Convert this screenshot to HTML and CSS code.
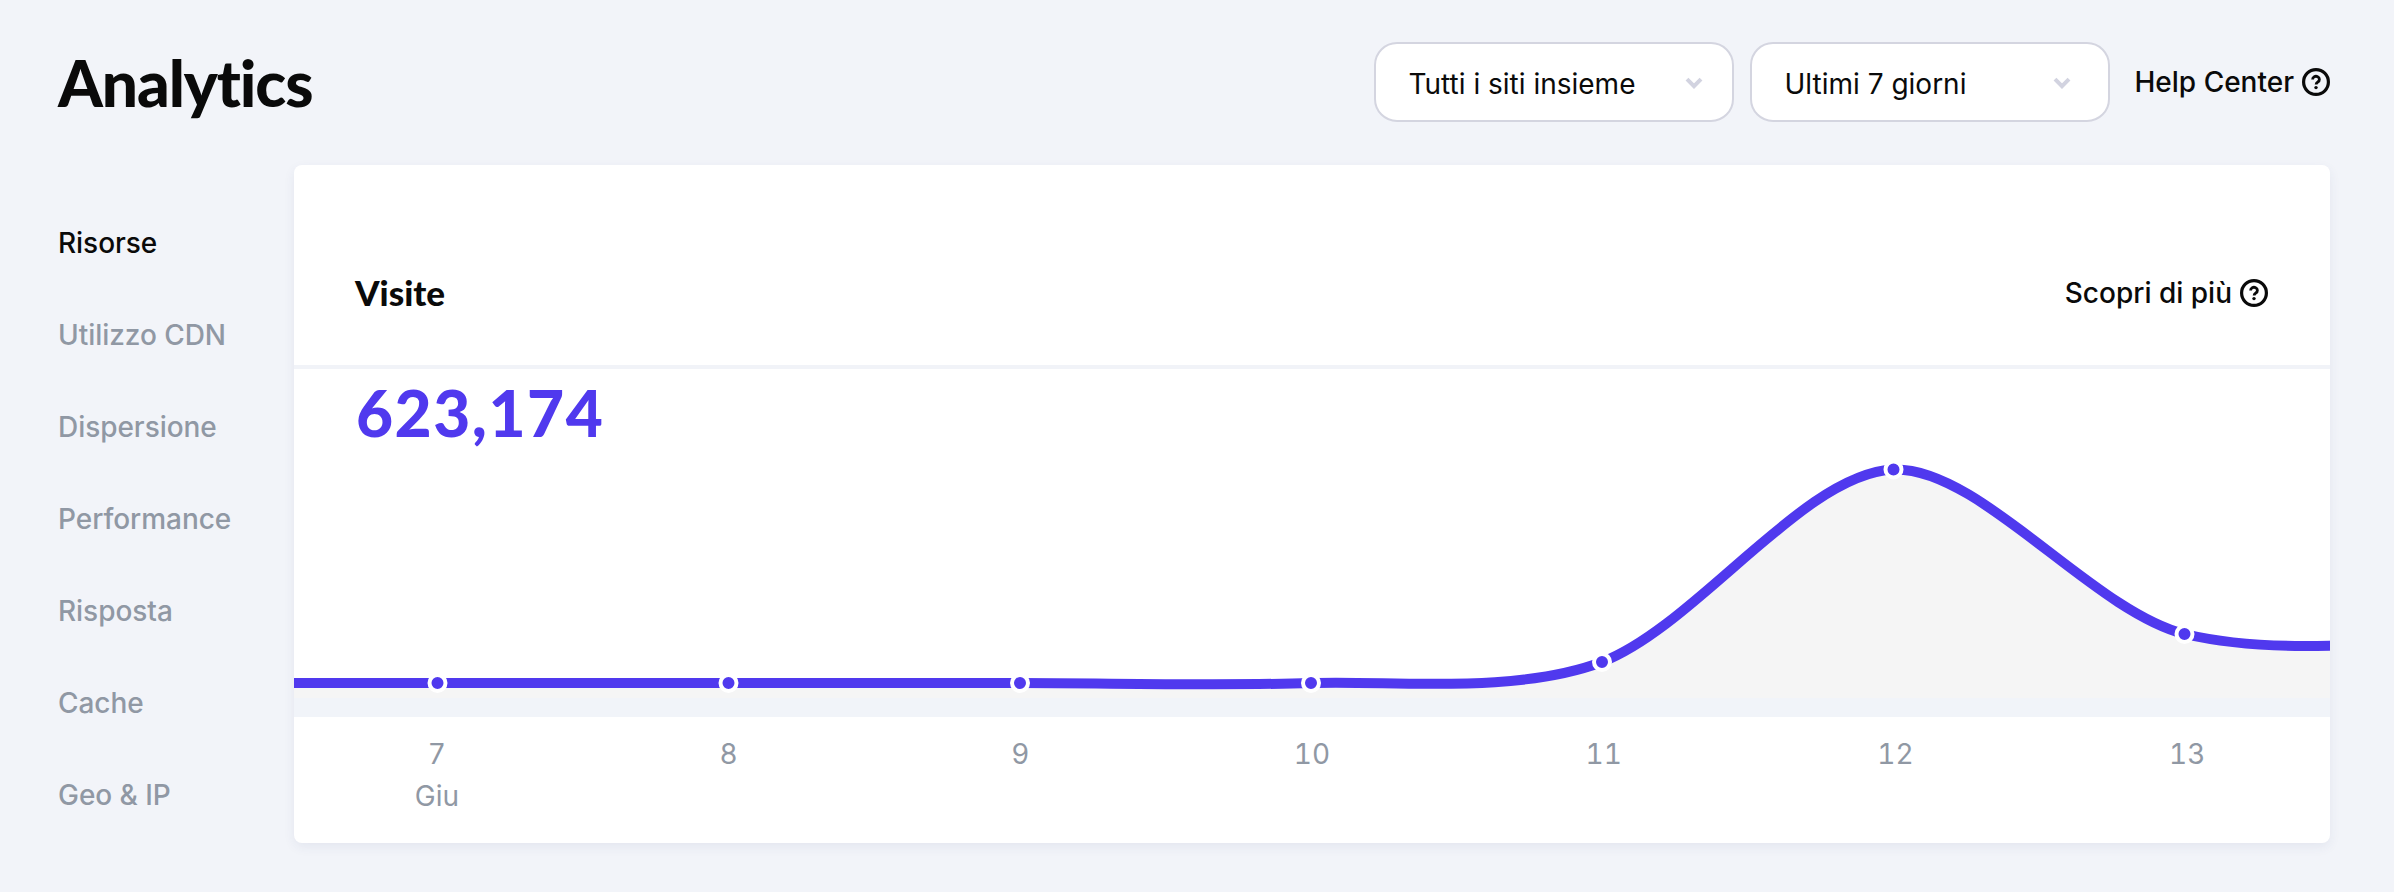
FILE: index.html
```html
<!DOCTYPE html>
<html lang="it">
<head>
<meta charset="utf-8">
<title>Analytics</title>
<link rel="stylesheet" href="styles.css">
</head>
<body>
<svg width="0" height="0" class="sprite">
  <symbol id="help" viewBox="0 0 28 28">
    <circle cx="14" cy="14" r="12.4" fill="none" stroke="currentColor" stroke-width="3.200"/>
    <path d="M10.600 11.400a3.400 3.100 0 1 1 5.200 2.600c-1.200.7-1.700 1.200-1.700 2.600" fill="none" stroke="currentColor" stroke-width="2.800"/>
    <circle cx="14" cy="19.600" r="1.700" fill="currentColor"/>
  </symbol>
  <symbol id="chevron" viewBox="0 0 18 12">
    <path d="M2 2.200l7 7 7-7" fill="none" stroke="currentColor" stroke-width="4"/>
  </symbol>
</svg>
<header class="header">
  <h1 class="title">Analytics</h1>
  <div class="actions">
    <div class="select"><span>Tutti i siti insieme</span><svg class="chevron"><use href="#chevron"/></svg></div>
    <div class="select period"><span>Ultimi 7 giorni</span><svg class="chevron"><use href="#chevron"/></svg></div>
    <a class="help-link">Help Center<svg class="help-icon"><use href="#help"/></svg></a>
  </div>
</header>
<main class="layout">
  <nav class="nav">
    <a class="nav-item active"><span>Risorse</span></a>
    <a class="nav-item"><span>Utilizzo CDN</span></a>
    <a class="nav-item"><span>Dispersione</span></a>
    <a class="nav-item"><span>Performance</span></a>
    <a class="nav-item"><span>Risposta</span></a>
    <a class="nav-item"><span>Cache</span></a>
    <a class="nav-item"><span>Geo &amp; IP</span></a>
  </nav>
  <section class="card">
    <div class="card-head">
      <h2 class="card-title">Visite</h2>
      <a class="help-link">Scopri di più<svg class="help-icon"><use href="#help"/></svg></a>
    </div>
    <div class="total"><span>623,174</span></div>
    <svg class="chart" viewBox="0 0 2036 267">
      <path class="area" d="M0 233H726C813 233 930 236 1017 233C1097 230 1220 245 1308 212C1403 175 1510 23 1599.500 19.500C1685 16.500 1797 160 1890.500 184C1972 203 2100 199 2181.500 175V248H0Z"/>
      <rect class="band" y="248" width="2036" height="19"/>
      <path class="line" d="M-5 233H726C813 233 930 236 1017 233C1097 230 1220 245 1308 212C1403 175 1510 23 1599.500 19.500C1685 16.500 1797 160 1890.500 184C1972 203 2100 199 2181.500 175"/>
      <g class="dots">
        <circle cx="143.500" cy="233" r="8"/>
        <circle cx="434.500" cy="233" r="8"/>
        <circle cx="726" cy="233" r="8"/>
        <circle cx="1017" cy="233" r="8"/>
        <circle cx="1308" cy="212" r="8"/>
        <circle cx="1599.500" cy="19.500" r="8"/>
        <circle cx="1890.500" cy="184" r="8"/>
      </g>
    </svg>
    <div class="axis">
      <div>7<br>Giu</div><div>8</div><div>9</div><div>10</div><div>11</div><div>12</div><div>13</div>
    </div>
  </section>
</main>
</body>
</html>
```

FILE: styles.css
```css
* { box-sizing: border-box; }
body {
  margin: 0;
  height: 892px;
  background: #f2f4f9;
  color: #0a0a0a;
  font-family: Inter, sans-serif;
  font-size: 28px;
  overflow: hidden;
}
.sprite { display: block; height: 0; }
.header {
  height: 165px;
  padding: 42px 64px 0 58px;
  display: flex;
  justify-content: space-between;
  align-items: flex-start;
}
.title {
  margin: 0;
  padding-top: 1px;
  font: 900 64px/80px Lato, sans-serif;
  letter-spacing: -1.1px;
}
.actions { display: flex; align-items: center; gap: 16px; }
.select {
  width: 360px;
  height: 80px;
  padding: 3px 29px 0 33px;
  border: 2px solid #d4d5e0;
  border-radius: 23px;
  background: #fff;
  display: flex;
  align-items: center;
  justify-content: space-between;
}
.select.period { padding-right: 37px; }
.chevron { width: 18px; height: 12px; margin-top: -2px; color: #d2d3e0; }
.help-link {
  display: flex;
  align-items: center;
  gap: 8px;
  font-weight: 500;
  margin-left: 9px;
}
.help-icon { width: 28px; height: 28px; }
.card-head .help-link { padding-top: 1px; }
.layout { display: flex; }
.nav {
  width: 294px;
  padding: 32px 0 0 58px;
  display: flex;
  flex-direction: column;
}
.nav-item {
  height: 92px;
  display: flex;
  align-items: center;
  font-weight: 500;
  letter-spacing: -0.05px;
  color: #9098a4;
}
.nav-item.active { color: #0a0a0a; }
.card {
  width: 2036px;
  height: 678px;
  background: #fff;
  border-radius: 8px;
  box-shadow: 0 4px 12px rgba(40, 60, 120, 0.07);
  display: flex;
  flex-direction: column;
}
.card-head {
  height: 204px;
  padding: 54px 62px 0 61px;
  border-bottom: 4px solid #f1f3f8;
  display: flex;
  align-items: center;
  justify-content: space-between;
}
.card-title { margin: 0; font: 900 35px/44px Lato, sans-serif; }
.total {
  height: 81px;
  padding: 4px 0 0 62px;
  color: #5039ee;
  font: 900 64px/80px Lato, sans-serif;
  letter-spacing: 1.5px;
}
.chart { display: block; width: 2036px; height: 267px; }
.area { fill: #f5f5f5; }
.band { fill: #f1f4f9; }
.line { fill: none; stroke: #5039ee; stroke-width: 10; }
.dots { fill: #5039ee; stroke: #fff; stroke-width: 4; }
.axis {
  margin: 16px -3px 0 -3px;
  display: grid;
  grid-template-columns: repeat(7, 1fr);
  line-height: 42px;
  text-align: center;
  font-variant-numeric: tabular-nums;
  color: #9098a4;
}
```
